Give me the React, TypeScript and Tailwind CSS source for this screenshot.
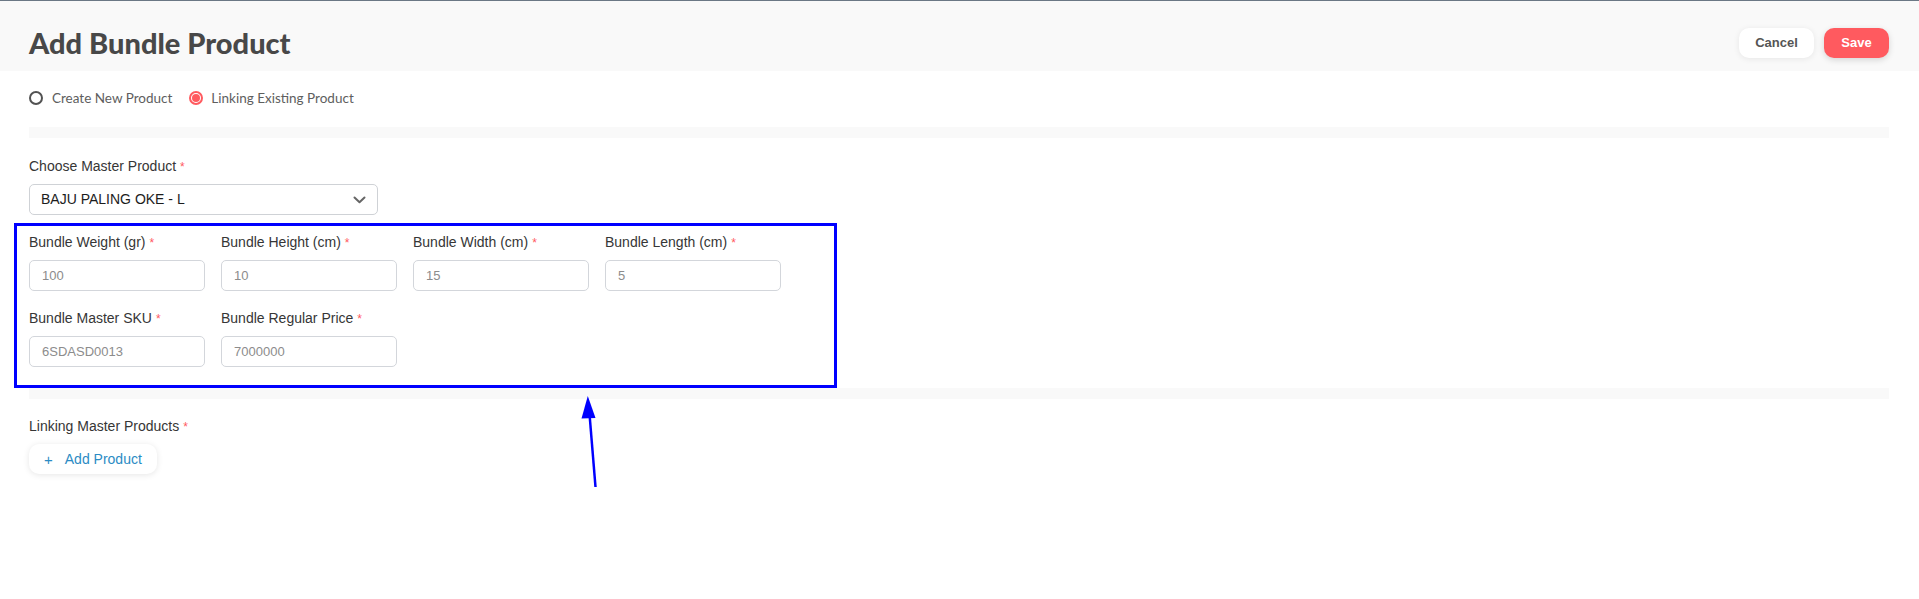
import React from "react";

const Req = () => (
  <span className="ml-[4px] text-[12px] text-[#ff5a5f]">*</span>
);

const Label = ({ children }: { children: React.ReactNode }) => (
  <div className="h-[20px] text-[14px] leading-[20px] text-[#363636] whitespace-nowrap">
    {children}
    <Req />
  </div>
);

const Field = ({ label, value }: { label: string; value: string }) => (
  <div className="flex w-[176px] flex-col">
    <Label>{label}</Label>
    <div className="mt-[8px] flex h-[31px] items-center rounded-[5px] border border-[#d3d6db] bg-white px-[12px] text-[13px] text-[#8c8c8c]">
      {value}
    </div>
  </div>
);

export default function App() {
  return (
    <div
      className="relative min-h-[599px] w-full bg-white"
      style={{ fontFamily: '"Liberation Sans", Arial, sans-serif' }}
    >
      <div className="border-t border-[#6b7885]">
        <div className="flex h-[70px] items-center justify-between bg-[#f9f9f9] pl-[29px] pr-[30px] pt-[13px]">
          <h1
            className="text-[29px] font-black leading-[36px] text-[#484848]"
            style={{ fontFamily: 'Lato, "Liberation Sans", sans-serif' }}
          >
            Add Bundle Product
          </h1>
          <div className="flex items-center gap-[10px]">
            <button className="flex h-[30px] w-[75px] items-center justify-center rounded-[10px] bg-white text-[13px] font-bold text-[#555555] shadow-[0_1px_6px_rgba(0,0,0,0.08)]">
              Cancel
            </button>
            <button className="flex h-[30px] w-[65px] items-center justify-center rounded-[10px] bg-[#ff5a5f] text-[13px] font-bold text-white shadow-[0_2px_6px_rgba(0,0,0,0.15)]">
              Save
            </button>
          </div>
        </div>
      </div>

      <div className="flex flex-col pl-[29px] pr-[30px]">
        <div
          className="mt-[17px] flex h-[20px] items-center text-[13.5px] text-[#5e5e5e]"
          style={{ fontFamily: 'Lato, "Liberation Sans", sans-serif' }}
        >
          <span className="h-[14px] w-[14px] rounded-full border-2 border-[#525252] bg-white" />
          <span className="ml-[9px]">Create New Product</span>
          <span className="ml-[17px] flex h-[14px] w-[14px] items-center justify-center rounded-full border-2 border-[#ff5a5f] bg-white">
            <span className="h-[8px] w-[8px] rounded-full bg-[#ff5a5f]" />
          </span>
          <span className="ml-[8px]">Linking Existing Product</span>
        </div>

        <div className="mt-[19px] h-[11px] bg-[#f9f9f9]" />

        <div className="mt-[18px]">
          <Label>Choose Master Product</Label>
        </div>
        <div className="mt-[8px] flex h-[31px] w-[349px] items-center justify-between rounded-[5px] border border-[#cfd2d6] bg-white pl-[11px] pr-[11px]">
          <span className="text-[14px] font-medium text-[#1c1c1c]">BAJU PALING OKE - L</span>
          <svg width="13" height="8" viewBox="0 0 13 8" fill="none">
            <path d="M1.5 1.5L6.5 6.3L11.5 1.5" stroke="#666666" strokeWidth="2" strokeLinecap="round" strokeLinejoin="round" />
          </svg>
        </div>

        <div className="mt-[17px] flex flex-col gap-[17px]">
          <div className="flex gap-[16px]">
            <Field label="Bundle Weight (gr)" value="100" />
            <Field label="Bundle Height (cm)" value="10" />
            <Field label="Bundle Width (cm)" value="15" />
            <Field label="Bundle Length (cm)" value="5" />
          </div>
          <div className="flex gap-[16px]">
            <Field label="Bundle Master SKU" value="6SDASD0013" />
            <Field label="Bundle Regular Price" value="7000000" />
          </div>
        </div>

        <div className="mt-[21px] h-[11px] bg-[#f9f9f9]" />

        <div className="mt-[17px]">
          <Label>Linking Master Products</Label>
        </div>
        <div className="mt-[8px]">
          <button className="flex h-[30px] w-[128px] items-center gap-[12px] rounded-[10px] bg-white pl-[15px] text-[14px] text-[#2b8bc4] shadow-[0_1px_6px_rgba(0,0,0,0.1)]">
            <span className="text-[15px] leading-none">+</span>
            <span>Add Product</span>
          </button>
        </div>
      </div>

      <div className="pointer-events-none absolute left-[14px] top-[223px] h-[165px] w-[823px] border-[3px] border-[#0000ff]" />
      <svg
        className="pointer-events-none absolute left-0 top-0"
        width="1919"
        height="599"
        viewBox="0 0 1919 599"
      >
        <line x1="595.5" y1="487" x2="589.5" y2="414" stroke="#0000ff" strokeWidth="2.5" />
        <polygon points="587.8,396 581.5,418.5 595.5,418" fill="#0000ff" />
      </svg>
    </div>
  );
}
